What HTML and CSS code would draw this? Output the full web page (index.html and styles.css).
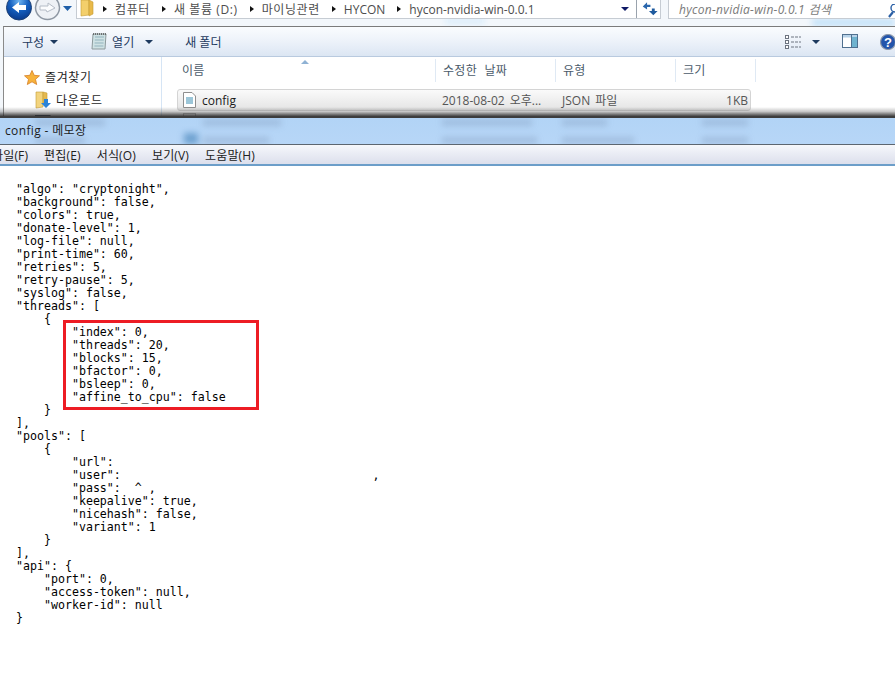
FILE: index.html
```html
<!DOCTYPE html>
<html lang="ko">
<head>
<meta charset="utf-8">
<title>config - 메모장</title>
<link rel="stylesheet" href="styles.css">
</head>
<body>
<section class="explorer">
  <div class="glow glow-a"></div>
  <div class="glow glow-b"></div>
  <div class="navbar">
    <svg class="nav-buttons" width="76" height="26" viewBox="0 0 76 26">
      <defs>
        <radialGradient id="backfill" cx="50%" cy="25%" r="75%">
          <stop offset="0" stop-color="#6fb4f0"/><stop offset=".5" stop-color="#1560c0"/><stop offset="1" stop-color="#0a3a8c"/>
        </radialGradient>
      </defs>
      <circle cx="19" cy="7.500" r="12.500" fill="url(#backfill)" stroke="#1b3f74"/>
      <path d="M12 7.500 L19 2 V5 H26 V10 H19 V13 Z" fill="#fff"/>
      <circle cx="47.500" cy="7.500" r="12" fill="#eef1f5" stroke="#8f98a3" stroke-width="1.500"/>
      <path d="M55 8 L48 3 V6 H40 V10 H46 L47 12 Z" fill="#fbfcfd" stroke="#b5bcc6"/>
      <path d="M63 6 H72 L67.500 11 Z" fill="#1f5fa8"/>
    </svg>
    <div class="address">
      <svg class="folder" width="14" height="17" viewBox="0 0 14 17">
        <path d="M1 0 H9 V15 L1 16 Z" fill="#f3cf6b" stroke="#c59b34" stroke-width=".6"/>
        <path d="M9 0 L13 2 V14 L9 16 Z" fill="#e9b949" stroke="#c59b34" stroke-width=".6"/>
      </svg>
      <ol class="crumbs">
        <li>컴퓨터</li><li>새 볼륨 (D:)</li><li>마이닝관련</li><li class="crumb-latin">HYCON</li><li class="crumb-latin">hycon-nvidia-win-0.0.1</li>
      </ol>
      <span class="caret caret-navy"></span>
      <svg class="refresh" width="24" height="18" viewBox="0 0 24 18">
        <path d="M6 6.500 L10.500 2 V4.500 H14 V7 H10.500 V9.500 Z" fill="#2a67ad"/>
        <path d="M21.500 11 L17 15.500 L12.500 11 H15.500 V8.500 H18.500 V11 Z" fill="#1e5a9e"/>
      </svg>
    </div>
    <div class="search">
      <span>hycon-nvidia-win-0.0.1 <span class="search-ko">검색</span></span>
      <svg class="loupe" width="8" height="14" viewBox="0 0 8 14"><path d="M1 13 L5 8" stroke="#2a5fa5" stroke-width="2.200"/><circle cx="7" cy="4" r="4" fill="none" stroke="#2a5fa5" stroke-width="1.400"/></svg>
    </div>
  </div>

  <div class="frame">
    <div class="toolbar">
      <span class="tool">구성<span class="caret"></span></span>
      <span class="tool tool-open">
        <svg width="16" height="18" viewBox="0 0 16 18">
          <path d="M2 1 H15 L14 16 H1 Z" fill="#cfe2e4" stroke="#8d9a9c"/>
          <path d="M4 4 H13 M3.800 7 H12.800 M3.600 10 H12.600 M3.400 13 H12.400" stroke="#93b3bd"/>
          <path d="M2 1 H15" stroke="#555" stroke-dasharray="1 1" stroke-width="1.500"/>
        </svg>
        열기<span class="caret caret-open"></span>
      </span>
      <span class="tool">새 폴더</span>
      <span class="tool-right">
        <svg width="16" height="14" viewBox="0 0 16 14">
          <g fill="#fff" stroke="#6d7480"><rect x=".5" y=".5" width="3" height="3"/><rect x=".5" y="5.500" width="3" height="3"/><rect x=".5" y="10.500" width="3" height="3"/></g>
          <path d="M6 2 H16 M6 7 H16 M6 12 H16" stroke="#6d7480" stroke-dasharray="3 1"/>
        </svg>
        <span class="caret caret-view"></span>
        <svg class="pane-icon" width="17" height="15" viewBox="0 0 17 15">
          <rect x=".5" y=".5" width="15" height="13" fill="#fff" stroke="#50708f"/>
          <rect x="1" y="1" width="14" height="2.500" fill="#b7d2e8"/>
          <rect x="10" y="3" width="5" height="10" fill="#6fb3cf"/>
          <path d="M9.500 1 V13" stroke="#50708f"/>
        </svg>
        <svg class="help-icon" width="16" height="16" viewBox="0 0 16 16">
          <circle cx="8" cy="8" r="7.500" fill="#2455ab" stroke="#8e9aab" stroke-width="1.200"/>
          <text x="8" y="12.500" text-anchor="middle" class="help-mark">?</text>
        </svg>
      </span>
    </div>

    <div class="panes">
      <nav class="sidebar">
        <div class="fav">
          <svg width="16" height="15" viewBox="0 0 16 15"><path d="M8 0.500 L10.200 5.300 L15.500 5.800 L11.500 9.300 L12.700 14.500 L8 11.800 L3.300 14.500 L4.500 9.300 L0.500 5.800 L5.800 5.300 Z" fill="#f7b23b" stroke="#d77f26" stroke-width=".8"/></svg>
          <span>즐겨찾기</span>
        </div>
        <div class="fav fav-sub">
          <svg width="16" height="18" viewBox="0 0 16 18">
            <path d="M1 1 H8 V16 L1 17 Z" fill="#f3d47e" stroke="#c59b34" stroke-width=".6"/>
            <path d="M8 1 L12 2 V12 H8 Z" fill="#e5b94f" stroke="#c59b34" stroke-width=".6"/>
            <path d="M9 8 H13 V12 H16 L11 17 L6 12 H9 Z" fill="#2b83d8"/>
          </svg>
          <span>다운로드</span>
        </div>
        <div class="fav fav-sub fav-fade">
          <svg width="16" height="14" viewBox="0 0 16 14"><rect width="15" height="11" fill="#2d4a78" stroke="#444"/></svg>
          <span class="blur-bar"></span>
        </div>
      </nav>
      <div class="files">
        <span class="sort-mark"></span>
        <div class="cols cols-head">
          <span class="col col-first">이름</span><span class="col">수정한 날짜</span><span class="col">유형</span><span class="col">크기</span>
        </div>
        <div class="cols row-selected">
          <span class="cell cell-name">
            <svg width="13" height="16" viewBox="0 0 13 16">
              <path d="M.5 .5 H9 L12.500 4 V15.500 H.5 Z" fill="#fff" stroke="#8f8f8f"/>
              <rect x="3" y="5" width="7" height="7" fill="#9cc6d8"/>
            </svg>
            config
          </span>
          <span class="cell">2018-08-02 오후...</span>
          <span class="cell">JSON 파일</span>
          <span class="cell cell-size">1KB</span>
        </div>
        <div class="row-under"><span class="ghost-file"></span></div>
      </div>
    </div>
  </div>
  <div class="shade"></div>
</section>

<section class="notepad">
  <header class="titlebar">
    <div class="ghosts">
      <span class="ghost ghost-1"></span><span class="ghost ghost-2"></span><span class="ghost ghost-3"></span>
      <span class="ghost ghost-4"></span><span class="ghost ghost-5"></span><span class="ghost ghost-6"></span>
      <span class="ghost ghost-7"></span><span class="ghost ghost-8"></span><span class="ghost ghost-9"></span>
      <span class="ghost ghost-10"></span><span class="ghost ghost-11"></span>
    </div>
    <span class="title-text">config - 메모장</span>
  </header>
  <div class="menubar">
    <span>파일(F)</span><span>편집(E)</span><span>서식(O)</span><span>보기(V)</span><span>도움말(H)</span>
  </div>
  <div class="editor">
<pre class="code">"algo": "cryptonight",
"background": false,
"colors": true,
"donate-level": 1,
"log-file": null,
"print-time": 60,
"retries": 5,
"retry-pause": 5,
"syslog": false,
"threads": [
    {
        "index": 0,
        "threads": 20,
        "blocks": 15,
        "bfactor": 0,
        "bsleep": 0,
        "affine_to_cpu": false
    }
],
"pools": [
    {
        "url":
        "user":                                    ,
        "pass":  ^ ,
        "keepalive": true,
        "nicehash": false,
        "variant": 1
    }
],
"api": {
    "port": 0,
    "access-token": null,
    "worker-id": null
}</pre>
    <div class="highlight"></div>
  </div>
</section>
</body>
</html>
```
FILE: styles.css
```css
* { box-sizing: border-box; }
html, body { margin: 0; padding: 0; }
body {
  width: 895px;
  height: 679px;
  overflow: hidden;
  background: #fff;
  font-family: "Open Sans", "Noto Sans CJK KR", sans-serif;
  font-size: 12px;
  color: #1a1a1a;
}

/* Explorer window behind */
.explorer {
  position: relative;
  height: 116px;
  overflow: hidden;
  background: #f3f7fb;
}
.glow { position: absolute; filter: blur(3px); }
.glow-a { left: 445px; top: 18px; width: 40px; height: 6px; background: #d9ecfb; }
.glow-b { left: 812px; top: 19px; width: 83px; height: 7px; background: #bfe0f8; }
.navbar {
  position: relative;
  display: flex;
  height: 26px;
  align-items: flex-start;
}
.nav-buttons { flex: none; display: block; }
.address {
  flex: none;
  width: 585px;
  height: 19px;
  display: flex;
  align-items: center;
  background: #fff;
  border: 1px solid #c6ccd3;
  border-top: 0;
  padding-left: 3px;
  color: #4d4d4d;
}
.folder { flex: none; margin-top: -2px; }
.crumbs {
  display: flex;
  flex: 1;
  list-style: none;
  margin: 0;
  padding: 0 0 0 21px;
  gap: 24px;
  font-size: 12px;
  white-space: nowrap;
}
.crumbs li { position: relative; line-height: 17px; letter-spacing: .6px; }
.crumbs .crumb-latin { letter-spacing: 0; }
.crumbs li::before {
  content: "";
  position: absolute;
  left: -12px;
  top: 5px;
  border-left: 4px solid #111;
  border-top: 3.500px solid transparent;
  border-bottom: 3.500px solid transparent;
}
.caret {
  display: inline-block;
  width: 0;
  height: 0;
  margin-left: 6px;
  border-top: 4px solid #1e3a5f;
  border-left: 4px solid transparent;
  border-right: 4px solid transparent;
}
.caret-navy { border-top-color: #0f1a66; margin: 0 7px 0 0; }
.caret-open { margin-left: 11px; }
.caret-view { margin: 0 22px 0 11px; }
.refresh { flex: none; border-left: 1px solid #9aa3ad; }
.search {
  flex: none;
  margin-left: 7px;
  width: 228px;
  height: 19px;
  display: flex;
  align-items: center;
  justify-content: space-between;
  background: #fff;
  border-left: 1px solid #c6ccd3;
  border-bottom: 1px solid #c6ccd3;
  padding-left: 10px;
  font-style: italic;
  letter-spacing: .3px;
  color: #7a7a7a;
}
.loupe { flex: none; margin-top: 3px; }

.frame {
  position: relative;
  margin-left: 3px;
  border-top: 1px solid #7b7b7b;
  border-left: 1px solid #8a8a8a;
  background: #fff;
  height: 90px;
}
.toolbar {
  height: 30px;
  display: flex;
  align-items: center;
  padding-left: 18px;
  background: linear-gradient(#fafcfe, #eef3fa 45%, #dce6f3);
  border-bottom: 1px solid #b9cadf;
  color: #1e3a5f;
  white-space: nowrap;
}
.tool { display: inline-flex; align-items: center; margin-right: 32px; }
.tool-open svg { margin: 0 5px 0 1px; }
.tool-right {
  margin-left: auto;
  display: inline-flex;
  align-items: center;
}
.help-icon { margin: 0 -1px 0 21px; flex: none; }
.pane-icon { flex: none; }
.help-mark { font: bold 13px "Liberation Sans", sans-serif; fill: #fff; }

.panes { display: flex; height: 60px; }
.sidebar {
  flex: none;
  width: 158px;
  border-right: 1px solid #d6e5f5;
  padding: 12px 0 0 20px;
  color: #1e1e1e;
}
.fav { display: flex; align-items: center; gap: 5px; height: 16px; letter-spacing: .6px; }
.fav svg { flex: none; }
.fav-sub { margin: 6px 0 0 11px; gap: 5px; height: 18px; }
.fav-fade { margin-top: 4px; }
.blur-bar { width: 46px; height: 9px; margin-top: 4px; background: #8d8d8d; filter: blur(2px); }
.files { position: relative; flex: 1; color: #4a5a6a; }
.sort-mark {
  position: absolute;
  left: 139px;
  top: 3px;
  border-bottom: 4px solid #8fb2d4;
  border-left: 4px solid transparent;
  border-right: 4px solid transparent;
}
.cols {
  display: grid;
  grid-template-columns: 274px 120px 120px 80px;
  align-items: center;
}
.cols-head { height: 25px; padding-top: 3px; }
.col {
  padding-left: 7px;
  border-right: 1px solid #dfe9f4;
  line-height: 23px;
  margin-top: -1px;
  letter-spacing: .3px;
  word-spacing: 4px;
}
.col-first { padding-left: 20px; }
.row-selected {
  height: 22px;
  margin: 7px 0 0 15px;
  width: 574px;
  grid-template-columns: 257px 120px 120px 75px;
  background: linear-gradient(#fafafa, #e4e4e4);
  border: 1px solid #d4d4d4;
  border-radius: 3px;
  color: #555;
}
.cell { padding-left: 7px; white-space: nowrap; word-spacing: 2px; }
.cell-name { display: flex; align-items: center; gap: 6px; padding-left: 5px; color: #1a1a1a; }
.cell-size { text-align: right; padding-right: 2px; }
.row-under { margin: 2px 0 0 21px; }
.ghost-file { display: block; width: 13px; height: 16px; border: 1px solid #bbb; background: #fff; }
.shade {
  position: absolute;
  left: 0;
  right: 0;
  bottom: 0;
  height: 9px;
  background: linear-gradient(rgba(70,70,70,0), rgba(70,70,70,.3) 50%, rgba(40,40,40,.85));
}

/* Notepad on top */
.notepad { position: relative; }
.titlebar {
  position: relative;
  height: 29px;
  overflow: hidden;
  background: linear-gradient(#b2d4f6, #b7d6f7);
  border-top: 2px solid #3d3d3d;
  border-bottom: 1px solid #5d6670;
  display: flex;
  align-items: center;
  padding: 0 0 3px 5px;
}
.title-text { position: relative; color: #1c1c1c; letter-spacing: .35px; }
.ghosts { position: absolute; inset: 0; filter: blur(3px); }
.ghost { position: absolute; height: 7px; background: rgba(90,110,140,.22); }
.ghost-1 { left: 35px; top: 1px; width: 70px; }
.ghost-2 { left: 35px; top: 19px; width: 50px; }
.ghost-3 { left: 203px; top: 1px; width: 78px; }
.ghost-4 { left: 203px; top: 19px; width: 66px; }
.ghost-5 { left: 442px; top: 1px; width: 90px; }
.ghost-6 { left: 442px; top: 19px; width: 95px; }
.ghost-7 { left: 562px; top: 1px; width: 45px; }
.ghost-8 { left: 562px; top: 19px; width: 72px; }
.ghost-9 { left: 702px; top: 1px; width: 46px; }
.ghost-10 { left: 702px; top: 19px; width: 46px; }
.ghost-11 { left: 184px; top: 15px; width: 14px; height: 11px; background: rgba(40,110,170,.5); }
.menubar {
  height: 21px;
  display: flex;
  align-items: center;
  gap: 16px;
  margin-left: -8px;
  background: linear-gradient(#f7f8fb, #eef0f7 30%, #dcdfec);
  border-bottom: 2px solid #6c9ec9;
  color: #202020;
  letter-spacing: .15px;
  white-space: nowrap;
  width: 903px;
}
.editor { position: relative; padding: 17px 0 0 16px; }
.code {
  margin: 0;
  font-family: "DejaVu Sans Mono", monospace;
  font-size: 11.620px;
  line-height: 13px;
  color: #000;
}
.highlight {
  position: absolute;
  left: 63px;
  top: 154px;
  width: 196px;
  height: 90px;
  border: 3px solid #ed1c24;
}
```
